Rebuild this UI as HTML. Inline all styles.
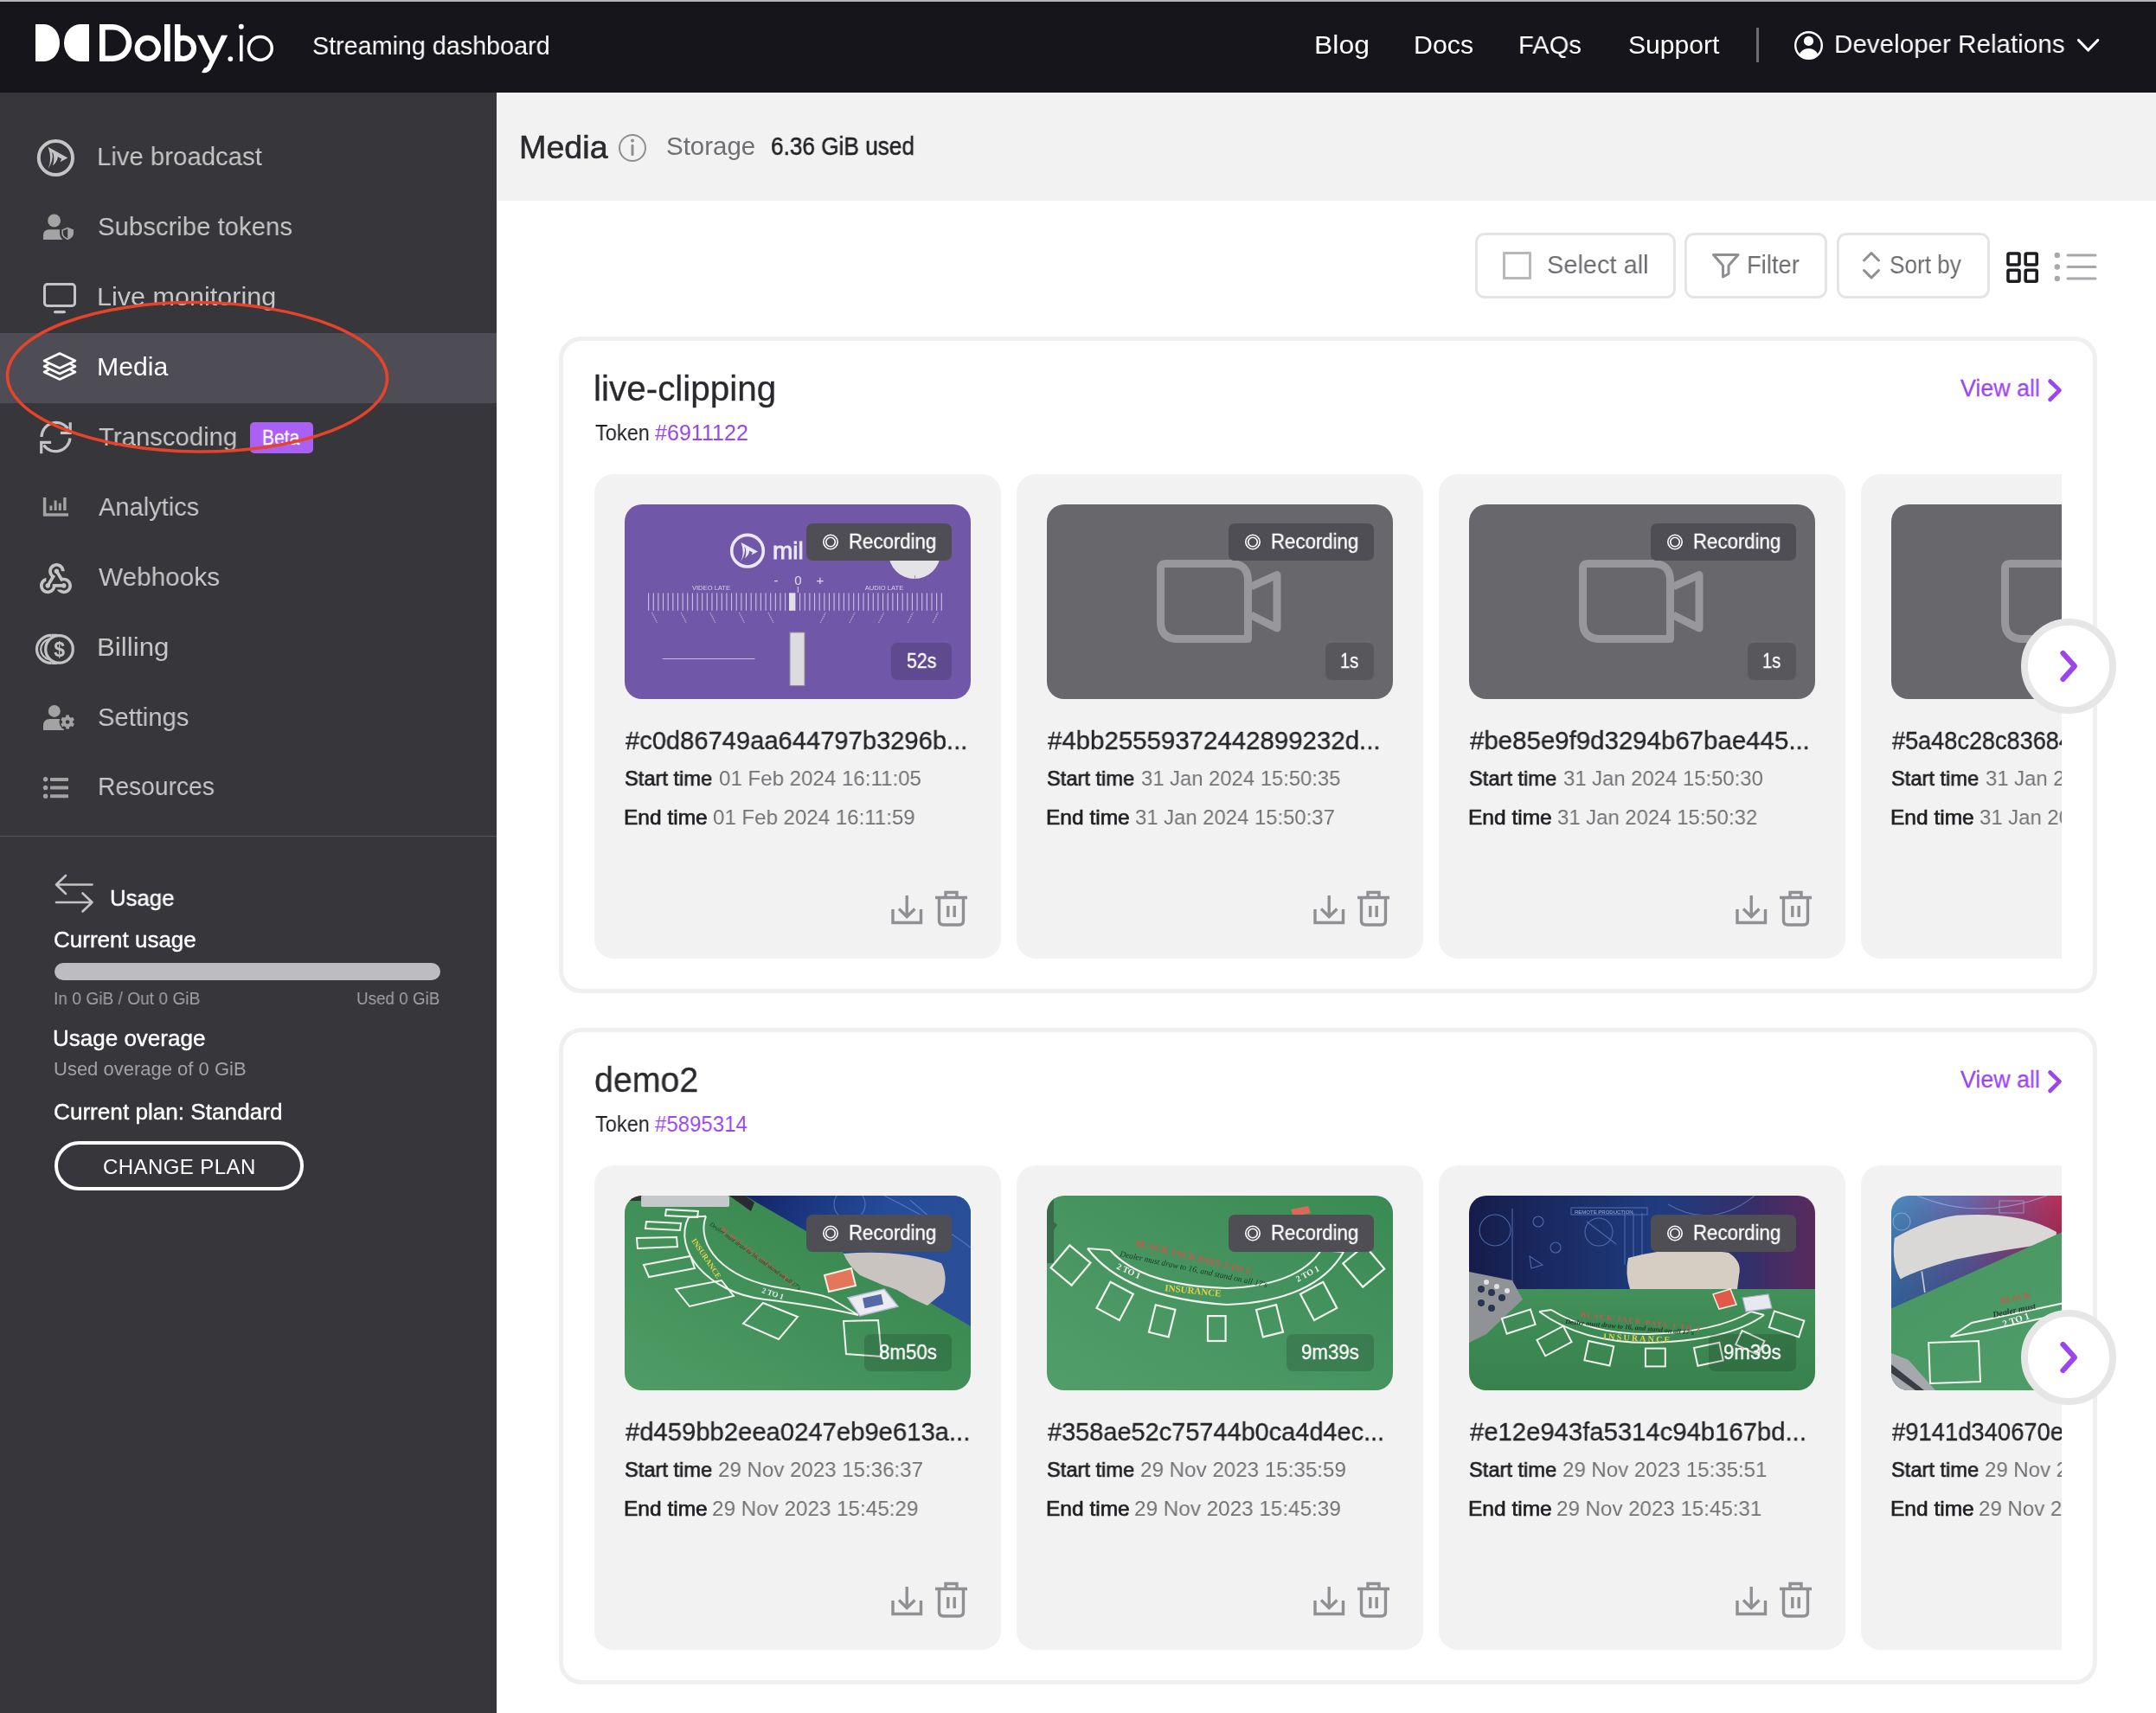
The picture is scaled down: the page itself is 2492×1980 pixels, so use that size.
<!DOCTYPE html>
<html><head><meta charset="utf-8"><title>Dolby.io Streaming dashboard - Media</title>
<style>
html,body{margin:0;padding:0;width:2492px;height:1980px;overflow:hidden;background:#fff;}
body{position:relative;font-family:"Liberation Sans",sans-serif;-webkit-font-smoothing:antialiased;}
svg{display:block}
</style></head><body>
<div style="position:absolute;left:0px;top:0px;width:2492px;height:2px;background:#b4b4b7"></div>
<div style="position:absolute;left:0px;top:2px;width:2492px;height:105px;background:#16151b"></div>
<div style="position:absolute;left:0px;top:107px;width:574px;height:1873px;background:#37363b"></div>
<div style="position:absolute;left:574px;top:107px;width:1918px;height:124.5px;background:#f2f2f2"></div>
<svg style="position:absolute;left:30px;top:15px;overflow:visible;will-change:transform;" width="300" height="80" viewBox="30 15 300 80">
<path fill="#ffffff" d="M41 28 H51 A18 21.5 0 0 1 51 71 H41 Z"/>
<path fill="#ffffff" d="M103 28 H92.6 A18.6 21.5 0 0 0 92.6 71 H103 Z"/>
<path fill="#ffffff" fill-rule="evenodd" d="M115 28 H130 A22.4 21.5 0 0 1 130 71 H115 Z M121.7 34.6 V64.4 H130 A15.7 14.9 0 0 0 130 34.6 Z"/>
<circle cx="170.75" cy="55.85" r="12.15" fill="none" stroke="#ffffff" stroke-width="6"/>
<rect x="190" y="28" width="6.7" height="43" fill="#ffffff"/>
<rect x="202" y="28" width="6.5" height="43" fill="#ffffff"/>
<defs><clipPath id="bcl"><rect x="205" y="30" width="30" height="50"/></clipPath></defs><circle cx="211.9" cy="55.85" r="12.15" fill="none" stroke="#ffffff" stroke-width="6" clip-path="url(#bcl)"/>
<path fill="#ffffff" d="M228 40.7 H235.2 L247.5 66 L244 73.5 Z"/>
<path fill="#ffffff" d="M256 40.7 H263.2 L243.5 80.5 Q240 85 234 84 L233 83.6 L236.2 78.4 Q238.6 78.6 240 76 Z"/>
<circle cx="266.3" cy="68.1" r="2.9" fill="#ffffff"/>
<rect x="277" y="40.7" width="3.6" height="30.3" fill="#ffffff"/>
<circle cx="278.8" cy="30.8" r="3" fill="#ffffff"/>
<circle cx="300.85" cy="55.85" r="13.4" fill="none" stroke="#ffffff" stroke-width="3.5"/>
</svg>
<div style="position:absolute;left:361.04px;top:37.60px;font-family:'Liberation Sans';font-size:30px;line-height:30px;font-weight:400;color:#ffffff;white-space:nowrap;will-change:transform;transform:scaleX(0.9572);transform-origin:0 0;">Streaming dashboard</div>
<div style="position:absolute;left:1518.87px;top:36.60px;font-family:'Liberation Sans';font-size:30px;line-height:30px;font-weight:400;color:#ffffff;white-space:nowrap;will-change:transform;transform:scaleX(1.0646);transform-origin:0 0;">Blog</div>
<div style="position:absolute;left:1633.98px;top:36.60px;font-family:'Liberation Sans';font-size:30px;line-height:30px;font-weight:400;color:#ffffff;white-space:nowrap;will-change:transform;transform:scaleX(1.0100);transform-origin:0 0;">Docs</div>
<div style="position:absolute;left:1755.06px;top:36.60px;font-family:'Liberation Sans';font-size:30px;line-height:30px;font-weight:400;color:#ffffff;white-space:nowrap;will-change:transform;transform:scaleX(0.9720);transform-origin:0 0;">FAQs</div>
<div style="position:absolute;left:1882.00px;top:36.60px;font-family:'Liberation Sans';font-size:30px;line-height:30px;font-weight:400;color:#ffffff;white-space:nowrap;will-change:transform;transform:scaleX(1.0025);transform-origin:0 0;">Support</div>
<div style="position:absolute;left:2029.7px;top:31.8px;width:3.5px;height:40px;background:#6e6e70"></div>
<svg style="position:absolute;left:2070px;top:32px;overflow:visible;will-change:transform;" width="42" height="42" viewBox="2070 32 42 42">
<defs><clipPath id="uc"><circle cx="2090.5" cy="52.5" r="15.3"/></clipPath></defs>
<circle cx="2090.5" cy="52.5" r="15.3" fill="none" stroke="#fff" stroke-width="2.4"/>
<circle cx="2090.5" cy="47.4" r="5.6" fill="#fff"/>
<ellipse cx="2090.5" cy="66.5" rx="11.3" ry="10.5" fill="#fff" clip-path="url(#uc)"/>
</svg>
<div style="position:absolute;left:2120.33px;top:36.00px;font-family:'Liberation Sans';font-size:30px;line-height:30px;font-weight:400;color:#ffffff;white-space:nowrap;will-change:transform;transform:scaleX(0.9867);transform-origin:0 0;">Developer Relations</div>
<svg style="position:absolute;left:2398px;top:42px;overflow:visible;will-change:transform;" width="32" height="22" viewBox="2398 42 32 22"><path d="M2402.5 46.5 L2413.6 58 L2424.7 46.5" fill="none" stroke="#fff" stroke-width="3.2" stroke-linecap="round" stroke-linejoin="round"/></svg>
<div style="position:absolute;left:0px;top:385px;width:574px;height:81px;background:#4e4d55"></div>
<div style="position:absolute;left:112.44px;top:165.60px;font-family:'Liberation Sans';font-size:30px;line-height:30px;font-weight:400;color:#c6c6c6;white-space:nowrap;will-change:transform;transform:scaleX(0.9784);transform-origin:0 0;">Live broadcast</div>
<div style="position:absolute;left:113.42px;top:246.60px;font-family:'Liberation Sans';font-size:30px;line-height:30px;font-weight:400;color:#c6c6c6;white-space:nowrap;will-change:transform;transform:scaleX(0.9775);transform-origin:0 0;">Subscribe tokens</div>
<div style="position:absolute;left:112.36px;top:327.60px;font-family:'Liberation Sans';font-size:30px;line-height:30px;font-weight:400;color:#c6c6c6;white-space:nowrap;will-change:transform;transform:scaleX(1.0183);transform-origin:0 0;">Live monitoring</div>
<div style="position:absolute;left:112.39px;top:408.60px;font-family:'Liberation Sans';font-size:30px;line-height:30px;font-weight:400;color:#ffffff;white-space:nowrap;will-change:transform;transform:scaleX(1.0072);transform-origin:0 0;">Media</div>
<div style="position:absolute;left:114.40px;top:489.60px;font-family:'Liberation Sans';font-size:30px;line-height:30px;font-weight:400;color:#c6c6c6;white-space:nowrap;will-change:transform;transform:scaleX(0.9773);transform-origin:0 0;">Transcoding</div>
<div style="position:absolute;left:114.40px;top:571.30px;font-family:'Liberation Sans';font-size:30px;line-height:30px;font-weight:400;color:#c6c6c6;white-space:nowrap;will-change:transform;transform:scaleX(0.9685);transform-origin:0 0;">Analytics</div>
<div style="position:absolute;left:114.40px;top:651.60px;font-family:'Liberation Sans';font-size:30px;line-height:30px;font-weight:400;color:#c6c6c6;white-space:nowrap;will-change:transform;transform:scaleX(0.9915);transform-origin:0 0;">Webhooks</div>
<div style="position:absolute;left:112.31px;top:732.60px;font-family:'Liberation Sans';font-size:30px;line-height:30px;font-weight:400;color:#c6c6c6;white-space:nowrap;will-change:transform;transform:scaleX(1.0425);transform-origin:0 0;">Billing</div>
<div style="position:absolute;left:113.43px;top:813.60px;font-family:'Liberation Sans';font-size:30px;line-height:30px;font-weight:400;color:#c6c6c6;white-space:nowrap;will-change:transform;transform:scaleX(0.9718);transform-origin:0 0;">Settings</div>
<div style="position:absolute;left:112.52px;top:894.10px;font-family:'Liberation Sans';font-size:30px;line-height:30px;font-weight:400;color:#c6c6c6;white-space:nowrap;will-change:transform;transform:scaleX(0.9402);transform-origin:0 0;">Resources</div>
<svg style="position:absolute;left:38px;top:155px;overflow:visible;will-change:transform;" width="54" height="55" viewBox="38 155 54 55">
<circle cx="64.4" cy="182.5" r="19.6" fill="none" stroke="#c4c4c4" stroke-width="4"/>
<path fill="#c4c4c4" d="M55.7 170 L78.4 182.4 L69.5 187.2 L71 183.6 L66.8 181.2 Q66.6 186.5 60.8 191.6 Q63.6 184 61.3 176.8 L60.2 176.2 Q62.6 184.6 55.3 195.6 Q60.8 184 55.7 170 Z"/>
</svg>
<svg style="position:absolute;left:40px;top:240px;overflow:visible;will-change:transform;" width="55" height="45" viewBox="40 240 55 45">
<circle cx="62.6" cy="255" r="7.4" fill="#a3a3a3"/>
<path fill="#a3a3a3" d="M50 277 V272 Q50 265.2 57 265.2 H69 Q73.5 265.2 73.5 270 V277 Z"/>
<path fill="#a3a3a3" stroke="#37363b" stroke-width="2.4" d="M70.2 264.6 L78.2 261.4 L86.2 264.6 V269.8 Q86.2 275.6 78.2 278.6 Q70.2 275.6 70.2 269.8 Z"/>
<path fill="#37363b" d="M78.2 264.6 L73 266.5 V269.8 Q73 273.4 78.2 275.6 Z"/>
</svg>
<svg style="position:absolute;left:45px;top:322px;overflow:visible;will-change:transform;" width="50" height="45" viewBox="45 322 50 45">
<rect x="51.5" y="328.5" width="35" height="25" rx="3.2" fill="none" stroke="#c4c4c4" stroke-width="3"/>
<rect x="62" y="359" width="14" height="3.2" rx="1.6" fill="#c4c4c4"/>
</svg>
<svg style="position:absolute;left:45px;top:400px;overflow:visible;will-change:transform;" width="50" height="48" viewBox="45 400 50 48">
<g fill="none" stroke="#fff" stroke-width="2.6" stroke-linejoin="round">
<path d="M69 408.5 L87 417 L69 425.5 L51 417 Z"/>
<path d="M56.5 420.8 L51 423.5 L69 432 L87 423.5 L81.5 420.8"/>
<path d="M56.5 427.3 L51 430 L69 438.5 L87 430 L81.5 427.3"/>
</g></svg>
<svg style="position:absolute;left:40px;top:480px;overflow:visible;will-change:transform;" width="55" height="50" viewBox="40 480 55 50">
<g fill="none" stroke="#c4c4c4" stroke-width="3.2">
<path d="M48 505 A16.8 16.8 0 0 1 78.5 495.5"/>
<path d="M81 506.5 A16.8 16.8 0 0 1 50.5 514.5"/>
<path d="M81.2 489.8 V500.4 H71.5" stroke-linecap="square"/>
<path d="M47.7 522.6 V511.3 H57.5" stroke-linecap="square"/>
</g></svg>
<svg style="position:absolute;left:45px;top:570px;overflow:visible;will-change:transform;" width="40" height="32" viewBox="45 570 40 32">
<path d="M51.6 575 V595 H79" fill="none" stroke="#a3a3a3" stroke-width="3.5"/>
<rect x="57.4" y="584.4" width="3" height="5.6" fill="#a3a3a3"/>
<rect x="62.6" y="578.5" width="3" height="11.5" fill="#a3a3a3"/>
<rect x="67.8" y="581.6" width="3" height="8.4" fill="#a3a3a3"/>
<rect x="73.2" y="575" width="3.4" height="15" fill="#a3a3a3"/>
</svg>
<svg style="position:absolute;left:42px;top:647px;overflow:visible;will-change:transform;" width="46" height="42" viewBox="42 647 46 42"><g transform="translate(42.3 647.3) scale(1.85)"><path fill="#c4c4c4" d="M10 15h5.88c.27-.31.67-.5 1.12-.5.83 0 1.5.67 1.5 1.5s-.67 1.5-1.5 1.5c-.44 0-.84-.19-1.12-.5H11.9c-.46 2.28-2.48 4-4.9 4-2.76 0-5-2.24-5-5 0-2.42 1.72-4.44 4-4.9v2.07c-1.16.41-2 1.53-2 2.83 0 1.65 1.35 3 3 3s3-1.35 3-3v-1zm2.5-11c1.650 0 3 1.35 3 3h2c0-2.76-2.24-5-5-5s-5 2.240-5 5c0 1.43.6 2.71 1.55 3.62l-2.35 3.9c-.68.14-1.2.75-1.2 1.48 0 .83.67 1.5 1.5 1.5s1.5-.67 1.5-1.5c0-.16-.02-.31-.07-.45l3.38-5.63C10.490 9.61 9.5 8.42 9.5 7c0-1.65 1.35-3 3-3zm4.5 9c-.64 0-1.23.2-1.72.54l-3.05-5.07C11.53 8.35 11 7.74 11 7c0-.83.67-1.5 1.5-1.5S14 6.17 14 7c0 .15-.02.29-.06.43l2.19 3.65c.28-.05.57-.08.87-.08 2.76 0 5 2.24 5 5s-2.24 5-5 5c-1.85 0-3.47-1.01-4.330-2.5h2.67c.48.32 1.05.5 1.66.5 1.65 0 3-1.35 3-3s-1.35-3-3-3z"/></g></svg>
<svg style="position:absolute;left:40px;top:728px;overflow:visible;will-change:transform;" width="50" height="45" viewBox="40 728 50 45">
<g fill="none" stroke="#c4c4c4" stroke-width="3.2">
<circle cx="68.5" cy="750.4" r="15.8"/>
<path d="M59.5 734.4 H66 M59.5 766.4 H66"/>
<path d="M59.5 734.4 A17 16 0 0 0 59.5 766.4"/>
<path d="M57.2 738.5 A14 12.5 0 0 0 57.2 762.5" stroke-width="2.2"/>
</g>
<text x="68.6" y="758.8" text-anchor="middle" font-family="Liberation Sans" font-weight="bold" font-size="23" fill="#c4c4c4">$</text>
</svg>
<svg style="position:absolute;left:45px;top:808px;overflow:visible;will-change:transform;" width="45" height="42" viewBox="45 808 45 42">
<circle cx="62.8" cy="821.9" r="7" fill="#a3a3a3"/>
<path fill="#a3a3a3" d="M50 844 V839 Q50 831 58 831 H68 Q74 831 74 836 V844 Z"/>
<circle cx="78.1" cy="834.5" r="9.6" fill="#37363b"/>
<g fill="#a3a3a3" transform="translate(78.1 834.5)">
<circle r="6.2"/>
<rect x="-1.9" y="-8" width="3.8" height="16"/>
<rect x="-1.9" y="-8" width="3.8" height="16" transform="rotate(60)"/>
<rect x="-1.9" y="-8" width="3.8" height="16" transform="rotate(120)"/>
</g>
<circle cx="78.1" cy="834.5" r="2.3" fill="#37363b"/>
</svg>
<svg style="position:absolute;left:45px;top:893px;overflow:visible;will-change:transform;" width="40" height="35" viewBox="45 893 40 35">
<g fill="#a3a3a3">
<circle cx="52.6" cy="900.8" r="2.7"/><circle cx="52.6" cy="910.5" r="2.7"/><circle cx="52.6" cy="920.2" r="2.7"/>
<rect x="58" y="899" width="21" height="4" rx="0.8"/><rect x="58" y="908.6" width="21" height="4" rx="0.8"/><rect x="58" y="918.2" width="21" height="4" rx="0.8"/>
</g></svg>
<div style="position:absolute;left:289px;top:488px;width:73px;height:36px;background:#ab60f4;border-radius:5px"></div>
<div style="position:absolute;left:303.12px;top:493.68px;font-family:'Liberation Sans';font-size:24px;line-height:24px;font-weight:400;color:#ffffff;white-space:nowrap;will-change:transform;transform:scaleX(0.8771);transform-origin:0 0;-webkit-text-stroke:0.3px #fff;">Beta</div>
<div style="position:absolute;left:0px;top:965.5px;width:574px;height:1.5px;background:#57565c"></div>
<svg style="position:absolute;left:60px;top:1005px;overflow:visible;will-change:transform;" width="52" height="55" viewBox="60 1005 52 55">
<g fill="none" stroke="#c4c4c4" stroke-width="2.6" stroke-linecap="round" stroke-linejoin="round">
<path d="M106.5 1022.5 H65 M76 1012 L65 1022.5 L76 1033"/>
<path d="M65 1043 H106.5 M95.5 1032.5 L106.5 1043 L95.5 1053.5"/>
</g></svg>
<div style="position:absolute;left:127.02px;top:1024.99px;font-family:'Liberation Sans';font-size:26px;line-height:26px;font-weight:400;color:#ffffff;white-space:nowrap;will-change:transform;transform:scaleX(0.9904);transform-origin:0 0;-webkit-text-stroke:0.4px #fff;">Usage</div>
<div style="position:absolute;left:62.00px;top:1072.99px;font-family:'Liberation Sans';font-size:26px;line-height:26px;font-weight:400;color:#ffffff;white-space:nowrap;will-change:transform;-webkit-text-stroke:0.4px #fff;">Current usage</div>
<div style="position:absolute;left:63px;top:1113px;width:446px;height:20px;background:#bdbcc1;border-radius:10px"></div>
<div style="position:absolute;left:62.04px;top:1144.07px;font-family:'Liberation Sans';font-size:20px;line-height:20px;font-weight:400;color:#a2a2a6;white-space:nowrap;will-change:transform;transform:scaleX(0.9578);transform-origin:0 0;">In 0 GiB / Out 0 GiB</div>
<div style="position:absolute;left:412.06px;top:1144.07px;font-family:'Liberation Sans';font-size:20px;line-height:20px;font-weight:400;color:#a2a2a6;white-space:nowrap;will-change:transform;transform:scaleX(0.9413);transform-origin:0 0;">Used 0 GiB</div>
<div style="position:absolute;left:61.00px;top:1186.99px;font-family:'Liberation Sans';font-size:26px;line-height:26px;font-weight:400;color:#ffffff;white-space:nowrap;will-change:transform;-webkit-text-stroke:0.4px #fff;">Usage overage</div>
<div style="position:absolute;left:62.00px;top:1225.37px;font-family:'Liberation Sans';font-size:22px;line-height:22px;font-weight:400;color:#a2a2a6;white-space:nowrap;will-change:transform;">Used overage of 0 GiB</div>
<div style="position:absolute;left:61.99px;top:1271.99px;font-family:'Liberation Sans';font-size:26px;line-height:26px;font-weight:400;color:#ffffff;white-space:nowrap;will-change:transform;transform:scaleX(1.0054);transform-origin:0 0;-webkit-text-stroke:0.4px #fff;">Current plan: Standard</div>
<div style="position:absolute;left:63px;top:1319px;width:288px;height:57px;box-sizing:border-box;border:4.5px solid #fff;border-radius:29px"></div>
<div style="position:absolute;left:119.00px;top:1336.68px;font-family:'Liberation Sans';font-size:24px;line-height:24px;font-weight:400;color:#ffffff;white-space:nowrap;will-change:transform;letter-spacing:0.429px;">CHANGE PLAN</div>
<svg style="position:absolute;left:0px;top:340px;overflow:visible;will-change:transform;z-index:50" width="460" height="195" viewBox="0 340 460 195"><ellipse cx="228" cy="435.8" rx="219.5" ry="86.2" fill="none" stroke="#e5432a" stroke-width="3.5" transform="rotate(0.5 228 435.8)"/></svg>
<div style="position:absolute;left:599.94px;top:151.67px;font-family:'Liberation Sans';font-size:37px;line-height:37px;font-weight:400;color:#2a2a2e;white-space:nowrap;will-change:transform;transform:scaleX(1.0184);transform-origin:0 0;-webkit-text-stroke:0.6px #2a2a2e;">Media</div>
<svg style="position:absolute;left:710px;top:150px;overflow:visible;will-change:transform;" width="42" height="42" viewBox="710 150 42 42">
<circle cx="731" cy="171" r="15" fill="none" stroke="#8e8e92" stroke-width="2"/>
<circle cx="731" cy="162.5" r="2" fill="#8e8e92"/>
<rect x="729.5" y="167" width="3" height="13" rx="1" fill="#8e8e92"/>
</svg>
<div style="position:absolute;left:769.98px;top:155.45px;font-family:'Liberation Sans';font-size:29px;line-height:29px;font-weight:400;color:#6f6f73;white-space:nowrap;will-change:transform;transform:scaleX(1.0157);transform-origin:0 0;">Storage</div>
<div style="position:absolute;left:891.10px;top:155.45px;font-family:'Liberation Sans';font-size:29px;line-height:29px;font-weight:400;color:#222226;white-space:nowrap;will-change:transform;transform:scaleX(0.9028);transform-origin:0 0;-webkit-text-stroke:0.5px #222226;">6.36 GiB used</div>
<div style="position:absolute;left:1704.5px;top:269px;width:232.5px;height:76px;box-sizing:border-box;border:3px solid #e4e4e4;border-radius:11px;background:#fff"></div>
<div style="position:absolute;left:1737px;top:291px;width:33px;height:32px;box-sizing:border-box;border:3px solid #b9b9bc;border-radius:1px"></div>
<div style="position:absolute;left:1788.03px;top:290.60px;font-family:'Liberation Sans';font-size:30px;line-height:30px;font-weight:400;color:#6e6e72;white-space:nowrap;will-change:transform;transform:scaleX(0.9659);transform-origin:0 0;">Select all</div>
<div style="position:absolute;left:1947px;top:269px;width:165px;height:76px;box-sizing:border-box;border:3px solid #e4e4e4;border-radius:11px;background:#fff"></div>
<svg style="position:absolute;left:1975px;top:288px;overflow:visible;will-change:transform;" width="40" height="38" viewBox="1975 288 40 38"><path d="M1980.5 294.5 H2009 L1998 307 V316.5 L1991.5 320 V307 Z" fill="none" stroke="#8f8f93" stroke-width="3" stroke-linejoin="round"/></svg>
<div style="position:absolute;left:2019.18px;top:290.60px;font-family:'Liberation Sans';font-size:30px;line-height:30px;font-weight:400;color:#6e6e72;white-space:nowrap;will-change:transform;transform:scaleX(0.9123);transform-origin:0 0;">Filter</div>
<div style="position:absolute;left:2122.5px;top:269px;width:177.5px;height:76px;box-sizing:border-box;border:3px solid #e4e4e4;border-radius:11px;background:#fff"></div>
<svg style="position:absolute;left:2148px;top:288px;overflow:visible;will-change:transform;" width="30" height="38" viewBox="2148 288 30 38"><path d="M2154.5 301 L2163 292.5 L2171.5 301 M2154.5 312.5 L2163 321 L2171.5 312.5" fill="none" stroke="#8f8f93" stroke-width="3" stroke-linecap="round" stroke-linejoin="round"/></svg>
<div style="position:absolute;left:2184.13px;top:290.60px;font-family:'Liberation Sans';font-size:30px;line-height:30px;font-weight:400;color:#6e6e72;white-space:nowrap;will-change:transform;transform:scaleX(0.8720);transform-origin:0 0;">Sort by</div>
<svg style="position:absolute;left:2315px;top:287px;overflow:visible;will-change:transform;" width="45" height="45" viewBox="2315 287 45 45"><g fill="none" stroke="#1d1d20" stroke-width="3.6">
<rect x="2321" y="293" width="13" height="13" rx="1.5"/><rect x="2341.2" y="293" width="13" height="13" rx="1.5"/>
<rect x="2321" y="312.2" width="13" height="13" rx="1.5"/><rect x="2341.2" y="312.2" width="13" height="13" rx="1.5"/></g></svg>
<svg style="position:absolute;left:2370px;top:287px;overflow:visible;will-change:transform;" width="58" height="45" viewBox="2370 287 58 45"><g fill="#a8a8ac">
<circle cx="2377.8" cy="295" r="3.2"/><circle cx="2377.8" cy="308.5" r="3.2"/><circle cx="2377.8" cy="322" r="3.2"/>
<rect x="2388.5" y="293.5" width="35" height="3" rx="1.5"/><rect x="2388.5" y="307" width="35" height="3" rx="1.5"/><rect x="2388.5" y="320.5" width="35" height="3" rx="1.5"/></g></svg>
<div style="position:absolute;left:646px;top:389px;width:1778px;height:759px;box-sizing:border-box;border:5px solid #efefef;border-radius:26px;background:#fff"></div>
<div style="position:absolute;left:685.98px;top:429.13px;font-family:'Liberation Sans';font-size:40px;line-height:40px;font-weight:400;color:#2a2a2e;white-space:nowrap;will-change:transform;transform:scaleX(1.0110);transform-origin:0 0;-webkit-text-stroke:0.3px #2a2a2e;">live-clipping</div>
<div style="position:absolute;left:688.00px;top:487.83px;font-family:'Liberation Sans';font-size:25px;line-height:25px;font-weight:400;color:#1e1e22;white-space:nowrap;will-change:transform;transform:scaleX(0.9421);transform-origin:0 0;">Token</div>
<div style="position:absolute;left:757.00px;top:487.83px;font-family:'Liberation Sans';font-size:25px;line-height:25px;font-weight:400;color:#9b45f2;white-space:nowrap;will-change:transform;transform:scaleX(1.0036);transform-origin:0 0;">#6911122</div>
<div style="position:absolute;left:2266.00px;top:435.64px;font-family:'Liberation Sans';font-size:27px;line-height:27px;font-weight:400;color:#9b45f2;white-space:nowrap;will-change:transform;transform:scaleX(0.9940);transform-origin:0 0;-webkit-text-stroke:0.3px #9b45f2;">View all</div>
<svg style="position:absolute;left:2362px;top:434px;overflow:visible;will-change:transform;" width="26" height="34" viewBox="2362 434 26 34"><path d="M2369.5 440.5 L2380.5 451.2 L2369.5 462" fill="none" stroke="#9b45f2" stroke-width="4.6" stroke-linecap="round" stroke-linejoin="round"/></svg>
<div style="position:absolute;left:651px;top:539px;width:1732px;height:580px;overflow:hidden"><div style="position:absolute;left:-651px;top:-539px;width:2492px;height:1980px">
<div style="position:absolute;left:687px;top:548px;width:470px;height:560px;background:#f2f2f2;border-radius:22px"></div>
<div style="position:absolute;left:722px;top:583px;width:400px;height:225px;border-radius:20px;overflow:hidden;will-change:transform"><svg width="400" height="225" viewBox="0 0 400 225" style="display:block">
<rect width="400" height="225" fill="#7157a8"/>
<circle cx="142" cy="53.7" r="18.3" fill="none" stroke="#ebe8f2" stroke-width="3.6"/>
<path fill="#ebe8f2" d="M134.5 44 L154 54.5 L146.5 58.6 L147.8 55.5 L144.2 53.5 Q144 58 139 62.4 Q141.4 56 139.4 49.8 L138.5 49.3 Q140.6 56.5 134.2 66 Q139 56 134.5 44 Z"/>
<text x="171" y="62.5" font-family="Liberation Sans" font-size="28" fill="#ebe8f2" stroke="#ebe8f2" stroke-width="0.9">mil</text>
<circle cx="335" cy="56" r="30" fill="#e4e3e8"/>
<line x1="335.5" y1="82" x2="335.5" y2="86" stroke="#9a98a0" stroke-width="1"/>
<g font-family="Liberation Sans" fill="#e2ddeb" text-anchor="middle">
<text x="175" y="93" font-size="15">-</text><text x="200.3" y="93" font-size="15">0</text><text x="226" y="93" font-size="15">+</text>
<text x="100" y="99" font-size="7.6" fill="#d8d0e8">VIDEO LATE</text><text x="300" y="99" font-size="7.6" fill="#d8d0e8">AUDIO LATE</text>
</g>
<line x1="200.3" y1="95" x2="200.3" y2="102" stroke="#e0dcea" stroke-width="1"/>
<g stroke="#cdc2e4" stroke-width="1.1"><line x1="27.60" y1="102.4" x2="27.60" y2="122.8"/><line x1="33.25" y1="102.4" x2="33.25" y2="122.8"/><line x1="38.89" y1="102.4" x2="38.89" y2="122.8"/><line x1="44.53" y1="102.4" x2="44.53" y2="122.8"/><line x1="50.18" y1="102.4" x2="50.18" y2="122.8"/><line x1="55.83" y1="102.4" x2="55.83" y2="122.8"/><line x1="61.47" y1="102.4" x2="61.47" y2="122.8"/><line x1="67.12" y1="102.4" x2="67.12" y2="122.8"/><line x1="72.76" y1="102.4" x2="72.76" y2="122.8"/><line x1="78.41" y1="102.4" x2="78.41" y2="122.8"/><line x1="84.05" y1="102.4" x2="84.05" y2="122.8"/><line x1="89.69" y1="102.4" x2="89.69" y2="122.8"/><line x1="95.34" y1="102.4" x2="95.34" y2="122.8"/><line x1="100.98" y1="102.4" x2="100.98" y2="122.8"/><line x1="106.63" y1="102.4" x2="106.63" y2="122.8"/><line x1="112.28" y1="102.4" x2="112.28" y2="122.8"/><line x1="117.92" y1="102.4" x2="117.92" y2="122.8"/><line x1="123.56" y1="102.4" x2="123.56" y2="122.8"/><line x1="129.21" y1="102.4" x2="129.21" y2="122.8"/><line x1="134.85" y1="102.4" x2="134.85" y2="122.8"/><line x1="140.50" y1="102.4" x2="140.50" y2="122.8"/><line x1="146.14" y1="102.4" x2="146.14" y2="122.8"/><line x1="151.79" y1="102.4" x2="151.79" y2="122.8"/><line x1="157.43" y1="102.4" x2="157.43" y2="122.8"/><line x1="163.08" y1="102.4" x2="163.08" y2="122.8"/><line x1="168.72" y1="102.4" x2="168.72" y2="122.8"/><line x1="174.37" y1="102.4" x2="174.37" y2="122.8"/><line x1="180.01" y1="102.4" x2="180.01" y2="122.8"/><line x1="185.66" y1="102.4" x2="185.66" y2="122.8"/><line x1="191.30" y1="102.4" x2="191.30" y2="122.8"/><line x1="196.95" y1="102.4" x2="196.95" y2="122.8"/><line x1="202.59" y1="102.4" x2="202.59" y2="122.8"/><line x1="208.24" y1="102.4" x2="208.24" y2="122.8"/><line x1="213.88" y1="102.4" x2="213.88" y2="122.8"/><line x1="219.53" y1="102.4" x2="219.53" y2="122.8"/><line x1="225.17" y1="102.4" x2="225.17" y2="122.8"/><line x1="230.82" y1="102.4" x2="230.82" y2="122.8"/><line x1="236.46" y1="102.4" x2="236.46" y2="122.8"/><line x1="242.11" y1="102.4" x2="242.11" y2="122.8"/><line x1="247.75" y1="102.4" x2="247.75" y2="122.8"/><line x1="253.40" y1="102.4" x2="253.40" y2="122.8"/><line x1="259.05" y1="102.4" x2="259.05" y2="122.8"/><line x1="264.69" y1="102.4" x2="264.69" y2="122.8"/><line x1="270.33" y1="102.4" x2="270.33" y2="122.8"/><line x1="275.98" y1="102.4" x2="275.98" y2="122.8"/><line x1="281.62" y1="102.4" x2="281.62" y2="122.8"/><line x1="287.27" y1="102.4" x2="287.27" y2="122.8"/><line x1="292.92" y1="102.4" x2="292.92" y2="122.8"/><line x1="298.56" y1="102.4" x2="298.56" y2="122.8"/><line x1="304.20" y1="102.4" x2="304.20" y2="122.8"/><line x1="309.85" y1="102.4" x2="309.85" y2="122.8"/><line x1="315.50" y1="102.4" x2="315.50" y2="122.8"/><line x1="321.14" y1="102.4" x2="321.14" y2="122.8"/><line x1="326.79" y1="102.4" x2="326.79" y2="122.8"/><line x1="332.43" y1="102.4" x2="332.43" y2="122.8"/><line x1="338.07" y1="102.4" x2="338.07" y2="122.8"/><line x1="343.72" y1="102.4" x2="343.72" y2="122.8"/><line x1="349.37" y1="102.4" x2="349.37" y2="122.8"/><line x1="355.01" y1="102.4" x2="355.01" y2="122.8"/><line x1="360.65" y1="102.4" x2="360.65" y2="122.8"/><line x1="366.30" y1="102.4" x2="366.30" y2="122.8"/></g>
<rect x="190" y="102.4" width="7" height="20.4" fill="#e2dfe8"/>
<g stroke="#a898cc" stroke-width="1.6" stroke-dasharray="1.5 1"><line x1="31.5" y1="125" x2="37.5" y2="137"/><line x1="65.2" y1="125" x2="71.2" y2="137"/><line x1="98.8" y1="125" x2="104.8" y2="137"/><line x1="132.4" y1="125" x2="138.4" y2="137"/><line x1="166" y1="125" x2="172" y2="137"/><line x1="226.3" y1="137" x2="232.3" y2="125"/><line x1="260" y1="137" x2="266" y2="125"/><line x1="293.6" y1="137" x2="299.6" y2="125"/><line x1="327.2" y1="137" x2="333.2" y2="125"/><line x1="356.2" y1="137" x2="362.2" y2="125"/></g>
<line x1="43.8" y1="178.5" x2="150.5" y2="178.5" stroke="#c9c0e0" stroke-width="1"/>
<rect x="191" y="148" width="17" height="61.6" fill="#dcdbe0" stroke="#8d8a98" stroke-width="1"/>
</svg></div>
<div style="position:absolute;left:932px;top:605px;width:168px;height:43px;background:#4f4e55;border-radius:7px"></div>
<svg style="position:absolute;left:947px;top:614px;overflow:visible;will-change:transform;" width="26" height="26" viewBox="947 614 26 26"><circle cx="960" cy="626.5" r="8.2" fill="none" stroke="#fff" stroke-width="1.6"/><circle cx="960" cy="626.5" r="5.3" fill="none" stroke="#fff" stroke-width="1.6"/></svg>
<div style="position:absolute;left:980.53px;top:614.53px;font-family:'Liberation Sans';font-size:23px;line-height:23px;font-weight:400;color:#ffffff;white-space:nowrap;will-change:transform;transform:scaleX(0.9656);transform-origin:0 0;-webkit-text-stroke:0.3px #fff;">Recording</div>
<div style="position:absolute;left:1030px;top:743px;width:70px;height:43px;background:rgba(0,0,0,0.15);border-radius:7px"></div>
<div style="position:absolute;left:1048.00px;top:752.53px;font-family:'Liberation Sans';font-size:23px;line-height:23px;font-weight:400;color:#ffffff;white-space:nowrap;will-change:transform;transform:scaleX(0.9294);transform-origin:0 0;-webkit-text-stroke:0.3px #fff;">52s</div>
<div style="position:absolute;left:723.00px;top:840.60px;font-family:'Liberation Sans';font-size:30px;line-height:30px;font-weight:400;color:#252529;white-space:nowrap;will-change:transform;transform:scaleX(0.9710);transform-origin:0 0;-webkit-text-stroke:0.35px #252529;">#c0d86749aa644797b3296b...</div>
<div style="position:absolute;left:722.03px;top:888.26px;font-family:'Liberation Sans';font-size:24.5px;line-height:24.5px;font-weight:400;color:#1f1f23;white-space:nowrap;will-change:transform;transform:scaleX(0.9651);transform-origin:0 0;-webkit-text-stroke:0.7px #1f1f23;">Start time</div>
<div style="position:absolute;left:830.70px;top:888.26px;font-family:'Liberation Sans';font-size:24.5px;line-height:24.5px;font-weight:400;color:#737377;white-space:nowrap;will-change:transform;transform:scaleX(0.9831);transform-origin:0 0;">01 Feb 2024 16:11:05</div>
<div style="position:absolute;left:721.01px;top:932.76px;font-family:'Liberation Sans';font-size:24.5px;line-height:24.5px;font-weight:400;color:#1f1f23;white-space:nowrap;will-change:transform;transform:scaleX(0.9973);transform-origin:0 0;-webkit-text-stroke:0.7px #1f1f23;">End time</div>
<div style="position:absolute;left:824.00px;top:932.76px;font-family:'Liberation Sans';font-size:24.5px;line-height:24.5px;font-weight:400;color:#737377;white-space:nowrap;will-change:transform;transform:scaleX(0.9818);transform-origin:0 0;">01 Feb 2024 16:11:59</div>
<svg style="position:absolute;left:1025px;top:1029px;overflow:visible;will-change:transform;" width="100" height="46" viewBox="1025 1029 100 46"><g fill="none" stroke="#909094" stroke-width="3.4">
<path d="M1032 1051 V1066.5 H1064.5 V1051" stroke-linejoin="miter"/>
<path d="M1048.2 1035 V1059"/>
<path d="M1039 1050.5 L1048.2 1059.5 L1057.4 1050.5"/>
<path d="M1081 1037.5 H1118"/>
<path d="M1093 1037.5 V1031.5 H1106 V1037.5"/>
<path d="M1085.5 1038 V1064 Q1085.5 1069 1090.5 1069 H1108.5 Q1113.5 1069 1113.5 1064 V1038"/>
<path d="M1095.8 1047 V1060 M1103.2 1047 V1060"/>
</g></svg>
<div style="position:absolute;left:1175px;top:548px;width:470px;height:560px;background:#f2f2f2;border-radius:22px"></div>
<div style="position:absolute;left:1210px;top:583px;width:400px;height:225px;border-radius:20px;overflow:hidden;will-change:transform"><svg width="400" height="225" viewBox="0 0 400 225" style="display:block"><rect width="400" height="225" fill="#68676c"/><g fill="none" stroke="#98979c" stroke-width="9" stroke-linejoin="round">
<path d="M137.5 68.5 H212.5 Q232.5 68.5 232.5 88.5 V155.5 H151.5 Q131.5 155.5 131.5 135.5 V74.5 Q131.5 68.5 137.5 68.5 Z"/>
<path d="M236 95 L266 81.5 V143 L236 128"/>
</g></svg></div>
<div style="position:absolute;left:1420px;top:605px;width:168px;height:43px;background:#4f4e55;border-radius:7px"></div>
<svg style="position:absolute;left:1435px;top:614px;overflow:visible;will-change:transform;" width="26" height="26" viewBox="1435 614 26 26"><circle cx="1448" cy="626.5" r="8.2" fill="none" stroke="#fff" stroke-width="1.6"/><circle cx="1448" cy="626.5" r="5.3" fill="none" stroke="#fff" stroke-width="1.6"/></svg>
<div style="position:absolute;left:1468.53px;top:614.53px;font-family:'Liberation Sans';font-size:23px;line-height:23px;font-weight:400;color:#ffffff;white-space:nowrap;will-change:transform;transform:scaleX(0.9656);transform-origin:0 0;-webkit-text-stroke:0.3px #fff;">Recording</div>
<div style="position:absolute;left:1532px;top:743px;width:56px;height:43px;background:rgba(0,0,0,0.15);border-radius:7px"></div>
<div style="position:absolute;left:1549.12px;top:752.53px;font-family:'Liberation Sans';font-size:23px;line-height:23px;font-weight:400;color:#ffffff;white-space:nowrap;will-change:transform;transform:scaleX(0.8775);transform-origin:0 0;-webkit-text-stroke:0.3px #fff;">1s</div>
<div style="position:absolute;left:1211.00px;top:840.60px;font-family:'Liberation Sans';font-size:30px;line-height:30px;font-weight:400;color:#252529;white-space:nowrap;will-change:transform;transform:scaleX(0.9807);transform-origin:0 0;-webkit-text-stroke:0.35px #252529;">#4bb25559372442899232d...</div>
<div style="position:absolute;left:1210.03px;top:888.26px;font-family:'Liberation Sans';font-size:24.5px;line-height:24.5px;font-weight:400;color:#1f1f23;white-space:nowrap;will-change:transform;transform:scaleX(0.9651);transform-origin:0 0;-webkit-text-stroke:0.7px #1f1f23;">Start time</div>
<div style="position:absolute;left:1318.70px;top:888.26px;font-family:'Liberation Sans';font-size:24.5px;line-height:24.5px;font-weight:400;color:#737377;white-space:nowrap;will-change:transform;transform:scaleX(0.9720);transform-origin:0 0;">31 Jan 2024 15:50:35</div>
<div style="position:absolute;left:1209.01px;top:932.76px;font-family:'Liberation Sans';font-size:24.5px;line-height:24.5px;font-weight:400;color:#1f1f23;white-space:nowrap;will-change:transform;transform:scaleX(0.9973);transform-origin:0 0;-webkit-text-stroke:0.7px #1f1f23;">End time</div>
<div style="position:absolute;left:1312.00px;top:932.76px;font-family:'Liberation Sans';font-size:24.5px;line-height:24.5px;font-weight:400;color:#737377;white-space:nowrap;will-change:transform;transform:scaleX(0.9737);transform-origin:0 0;">31 Jan 2024 15:50:37</div>
<svg style="position:absolute;left:1513px;top:1029px;overflow:visible;will-change:transform;" width="100" height="46" viewBox="1513 1029 100 46"><g fill="none" stroke="#909094" stroke-width="3.4">
<path d="M1520 1051 V1066.5 H1552.5 V1051" stroke-linejoin="miter"/>
<path d="M1536.2 1035 V1059"/>
<path d="M1527 1050.5 L1536.2 1059.5 L1545.4 1050.5"/>
<path d="M1569 1037.5 H1606"/>
<path d="M1581 1037.5 V1031.5 H1594 V1037.5"/>
<path d="M1573.5 1038 V1064 Q1573.5 1069 1578.5 1069 H1596.5 Q1601.5 1069 1601.5 1064 V1038"/>
<path d="M1583.8 1047 V1060 M1591.2 1047 V1060"/>
</g></svg>
<div style="position:absolute;left:1663px;top:548px;width:470px;height:560px;background:#f2f2f2;border-radius:22px"></div>
<div style="position:absolute;left:1698px;top:583px;width:400px;height:225px;border-radius:20px;overflow:hidden;will-change:transform"><svg width="400" height="225" viewBox="0 0 400 225" style="display:block"><rect width="400" height="225" fill="#68676c"/><g fill="none" stroke="#98979c" stroke-width="9" stroke-linejoin="round">
<path d="M137.5 68.5 H212.5 Q232.5 68.5 232.5 88.5 V155.5 H151.5 Q131.5 155.5 131.5 135.5 V74.5 Q131.5 68.5 137.5 68.5 Z"/>
<path d="M236 95 L266 81.5 V143 L236 128"/>
</g></svg></div>
<div style="position:absolute;left:1908px;top:605px;width:168px;height:43px;background:#4f4e55;border-radius:7px"></div>
<svg style="position:absolute;left:1923px;top:614px;overflow:visible;will-change:transform;" width="26" height="26" viewBox="1923 614 26 26"><circle cx="1936" cy="626.5" r="8.2" fill="none" stroke="#fff" stroke-width="1.6"/><circle cx="1936" cy="626.5" r="5.3" fill="none" stroke="#fff" stroke-width="1.6"/></svg>
<div style="position:absolute;left:1956.53px;top:614.53px;font-family:'Liberation Sans';font-size:23px;line-height:23px;font-weight:400;color:#ffffff;white-space:nowrap;will-change:transform;transform:scaleX(0.9656);transform-origin:0 0;-webkit-text-stroke:0.3px #fff;">Recording</div>
<div style="position:absolute;left:2020px;top:743px;width:56px;height:43px;background:rgba(0,0,0,0.15);border-radius:7px"></div>
<div style="position:absolute;left:2037.12px;top:752.53px;font-family:'Liberation Sans';font-size:23px;line-height:23px;font-weight:400;color:#ffffff;white-space:nowrap;will-change:transform;transform:scaleX(0.8775);transform-origin:0 0;-webkit-text-stroke:0.3px #fff;">1s</div>
<div style="position:absolute;left:1699.00px;top:840.60px;font-family:'Liberation Sans';font-size:30px;line-height:30px;font-weight:400;color:#252529;white-space:nowrap;will-change:transform;transform:scaleX(0.9810);transform-origin:0 0;-webkit-text-stroke:0.35px #252529;">#be85e9f9d3294b67bae445...</div>
<div style="position:absolute;left:1698.03px;top:888.26px;font-family:'Liberation Sans';font-size:24.5px;line-height:24.5px;font-weight:400;color:#1f1f23;white-space:nowrap;will-change:transform;transform:scaleX(0.9651);transform-origin:0 0;-webkit-text-stroke:0.7px #1f1f23;">Start time</div>
<div style="position:absolute;left:1806.70px;top:888.26px;font-family:'Liberation Sans';font-size:24.5px;line-height:24.5px;font-weight:400;color:#737377;white-space:nowrap;will-change:transform;transform:scaleX(0.9737);transform-origin:0 0;">31 Jan 2024 15:50:30</div>
<div style="position:absolute;left:1697.01px;top:932.76px;font-family:'Liberation Sans';font-size:24.5px;line-height:24.5px;font-weight:400;color:#1f1f23;white-space:nowrap;will-change:transform;transform:scaleX(0.9973);transform-origin:0 0;-webkit-text-stroke:0.7px #1f1f23;">End time</div>
<div style="position:absolute;left:1800.00px;top:932.76px;font-family:'Liberation Sans';font-size:24.5px;line-height:24.5px;font-weight:400;color:#737377;white-space:nowrap;will-change:transform;transform:scaleX(0.9754);transform-origin:0 0;">31 Jan 2024 15:50:32</div>
<svg style="position:absolute;left:2001px;top:1029px;overflow:visible;will-change:transform;" width="100" height="46" viewBox="2001 1029 100 46"><g fill="none" stroke="#909094" stroke-width="3.4">
<path d="M2008 1051 V1066.5 H2040.5 V1051" stroke-linejoin="miter"/>
<path d="M2024.2 1035 V1059"/>
<path d="M2015 1050.5 L2024.2 1059.5 L2033.4 1050.5"/>
<path d="M2057 1037.5 H2094"/>
<path d="M2069 1037.5 V1031.5 H2082 V1037.5"/>
<path d="M2061.5 1038 V1064 Q2061.5 1069 2066.5 1069 H2084.5 Q2089.5 1069 2089.5 1064 V1038"/>
<path d="M2071.8 1047 V1060 M2079.2 1047 V1060"/>
</g></svg>
<div style="position:absolute;left:2151px;top:548px;width:470px;height:560px;background:#f2f2f2;border-radius:22px"></div>
<div style="position:absolute;left:2186px;top:583px;width:400px;height:225px;border-radius:20px;overflow:hidden;will-change:transform"><svg width="400" height="225" viewBox="0 0 400 225" style="display:block"><rect width="400" height="225" fill="#68676c"/><g fill="none" stroke="#98979c" stroke-width="9" stroke-linejoin="round">
<path d="M137.5 68.5 H212.5 Q232.5 68.5 232.5 88.5 V155.5 H151.5 Q131.5 155.5 131.5 135.5 V74.5 Q131.5 68.5 137.5 68.5 Z"/>
<path d="M236 95 L266 81.5 V143 L236 128"/>
</g></svg></div>
<div style="position:absolute;left:2396px;top:605px;width:168px;height:43px;background:#4f4e55;border-radius:7px"></div>
<svg style="position:absolute;left:2411px;top:614px;overflow:visible;will-change:transform;" width="26" height="26" viewBox="2411 614 26 26"><circle cx="2424" cy="626.5" r="8.2" fill="none" stroke="#fff" stroke-width="1.6"/><circle cx="2424" cy="626.5" r="5.3" fill="none" stroke="#fff" stroke-width="1.6"/></svg>
<div style="position:absolute;left:2444.53px;top:614.53px;font-family:'Liberation Sans';font-size:23px;line-height:23px;font-weight:400;color:#ffffff;white-space:nowrap;will-change:transform;transform:scaleX(0.9656);transform-origin:0 0;-webkit-text-stroke:0.3px #fff;">Recording</div>
<div style="position:absolute;left:2508px;top:743px;width:56px;height:43px;background:rgba(0,0,0,0.15);border-radius:7px"></div>
<div style="position:absolute;left:2525.12px;top:752.53px;font-family:'Liberation Sans';font-size:23px;line-height:23px;font-weight:400;color:#ffffff;white-space:nowrap;will-change:transform;transform:scaleX(0.8775);transform-origin:0 0;-webkit-text-stroke:0.3px #fff;">1s</div>
<div style="position:absolute;left:2187.00px;top:840.60px;font-family:'Liberation Sans';font-size:30px;line-height:30px;font-weight:400;color:#252529;white-space:nowrap;will-change:transform;transform:scaleX(0.9031);transform-origin:0 0;-webkit-text-stroke:0.35px #252529;">#5a48c28c83684d1e9a7b21...</div>
<div style="position:absolute;left:2186.03px;top:888.26px;font-family:'Liberation Sans';font-size:24.5px;line-height:24.5px;font-weight:400;color:#1f1f23;white-space:nowrap;will-change:transform;transform:scaleX(0.9651);transform-origin:0 0;-webkit-text-stroke:0.7px #1f1f23;">Start time</div>
<div style="position:absolute;left:2294.70px;top:888.26px;font-family:'Liberation Sans';font-size:24.5px;line-height:24.5px;font-weight:400;color:#737377;white-space:nowrap;will-change:transform;transform:scaleX(0.9737);transform-origin:0 0;">31 Jan 2024 15:50:24</div>
<div style="position:absolute;left:2185.01px;top:932.76px;font-family:'Liberation Sans';font-size:24.5px;line-height:24.5px;font-weight:400;color:#1f1f23;white-space:nowrap;will-change:transform;transform:scaleX(0.9973);transform-origin:0 0;-webkit-text-stroke:0.7px #1f1f23;">End time</div>
<div style="position:absolute;left:2288.00px;top:932.76px;font-family:'Liberation Sans';font-size:24.5px;line-height:24.5px;font-weight:400;color:#737377;white-space:nowrap;will-change:transform;transform:scaleX(0.9754);transform-origin:0 0;">31 Jan 2024 15:50:26</div>
<svg style="position:absolute;left:2489px;top:1029px;overflow:visible;will-change:transform;" width="100" height="46" viewBox="2489 1029 100 46"><g fill="none" stroke="#909094" stroke-width="3.4">
<path d="M2496 1051 V1066.5 H2528.5 V1051" stroke-linejoin="miter"/>
<path d="M2512.2 1035 V1059"/>
<path d="M2503 1050.5 L2512.2 1059.5 L2521.4 1050.5"/>
<path d="M2545 1037.5 H2582"/>
<path d="M2557 1037.5 V1031.5 H2570 V1037.5"/>
<path d="M2549.5 1038 V1064 Q2549.5 1069 2554.5 1069 H2572.5 Q2577.5 1069 2577.5 1064 V1038"/>
<path d="M2559.8 1047 V1060 M2567.2 1047 V1060"/>
</g></svg>
</div></div>
<div style="position:absolute;left:2336px;top:715px;width:110px;height:110px;box-sizing:border-box;border:8px solid #e6e6e6;border-radius:50%;background:#fff"></div>
<svg style="position:absolute;left:2375px;top:749px;overflow:visible;will-change:transform;" width="34" height="44" viewBox="2375 749 34 44"><path d="M2384.5 755 L2398 770 L2384.5 785" fill="none" stroke="#9b45f2" stroke-width="6.2" stroke-linecap="round" stroke-linejoin="round"/></svg>
<div style="position:absolute;left:646px;top:1188px;width:1778px;height:759px;box-sizing:border-box;border:5px solid #efefef;border-radius:26px;background:#fff"></div>
<div style="position:absolute;left:687.02px;top:1228.13px;font-family:'Liberation Sans';font-size:40px;line-height:40px;font-weight:400;color:#2a2a2e;white-space:nowrap;will-change:transform;transform:scaleX(0.9829);transform-origin:0 0;-webkit-text-stroke:0.3px #2a2a2e;">demo2</div>
<div style="position:absolute;left:688.00px;top:1286.83px;font-family:'Liberation Sans';font-size:25px;line-height:25px;font-weight:400;color:#1e1e22;white-space:nowrap;will-change:transform;transform:scaleX(0.9421);transform-origin:0 0;">Token</div>
<div style="position:absolute;left:757.00px;top:1286.83px;font-family:'Liberation Sans';font-size:25px;line-height:25px;font-weight:400;color:#9b45f2;white-space:nowrap;will-change:transform;transform:scaleX(0.9611);transform-origin:0 0;">#5895314</div>
<div style="position:absolute;left:2266.00px;top:1234.64px;font-family:'Liberation Sans';font-size:27px;line-height:27px;font-weight:400;color:#9b45f2;white-space:nowrap;will-change:transform;transform:scaleX(0.9940);transform-origin:0 0;-webkit-text-stroke:0.3px #9b45f2;">View all</div>
<svg style="position:absolute;left:2362px;top:1233px;overflow:visible;will-change:transform;" width="26" height="34" viewBox="2362 1233 26 34"><path d="M2369.5 1239.5 L2380.5 1250.2 L2369.5 1261" fill="none" stroke="#9b45f2" stroke-width="4.6" stroke-linecap="round" stroke-linejoin="round"/></svg>
<div style="position:absolute;left:651px;top:1338px;width:1732px;height:580px;overflow:hidden"><div style="position:absolute;left:-651px;top:-1338px;width:2492px;height:1980px">
<div style="position:absolute;left:687px;top:1347px;width:470px;height:560px;background:#f2f2f2;border-radius:22px"></div>
<div style="position:absolute;left:722px;top:1382px;width:400px;height:225px;border-radius:20px;overflow:hidden;will-change:transform"><svg width="400" height="225" viewBox="0 0 400 225" style="display:block">
<defs>
<linearGradient id="ag" x1="1" y1="0" x2="0" y2="1"><stop offset="0" stop-color="#318249"/><stop offset="1" stop-color="#509c66"/></linearGradient>
</defs>
<rect width="400" height="225" fill="url(#ag)"/>
<defs><linearGradient id="ab" x1="0" y1="0" x2="1" y2="0.3"><stop offset="0" stop-color="#142468"/><stop offset="0.6" stop-color="#244c9a"/><stop offset="1" stop-color="#2a4f98"/></linearGradient></defs>
<path d="M139 0 H400 V151 Z" fill="url(#ab)"/><path d="M121 0 H139 L150 8 L146 18 Z" fill="#2a2a30"/>
<g stroke="#6f93cf" stroke-width="1.2" fill="none" opacity="0.6"><circle cx="260" cy="10" r="18"/><path d="M300 0 Q360 30 400 60"/><path d="M330 5 L370 40"/></g>
<path d="M253 67 Q320 62 366 78 Q374 92 368 112 L350 127 L330 118 Q312 106 300 104 L272 92 Q258 80 253 67 Z" fill="#c9c4c0"/>
<rect x="19" y="0" width="102" height="13" rx="2" fill="#c5c9cc"/>
<rect x="0" y="0" width="19" height="6" fill="#2b3a2e"/>
<g fill="none" stroke="#f2f2ee" stroke-width="2">
<path d="M48 16 L85 18 L84 25 L47 23 Z"/>
<path d="M25 30 L65 32 L64 40 L24 38 Z"/>
<path d="M14 49 L60 48 L61 59 L15 61 Z"/>
<path d="M22 80 L76 70 L81 84 L28 94 Z"/>
<path d="M59 108 L112 98 L126 116 L75 128 Z"/>
<path d="M137 148 L160 124 L200 140 L178 166 Z"/>
<path d="M253 145 L293 144 L297 186 L256 183 Z"/>
<path d="M74 25 C55 62 95 112 162 120 S252 134 270 138"/>
<path d="M94 23.7 C82 56 112 96 182 107 S236 120 247 124"/>
<path d="M74 25 L94 23.7"/><path d="M247 124 L270 138"/>
</g>
<text x="0" y="0" font-family="Liberation Serif" font-weight="bold" font-size="9" fill="#e6d24a" transform="translate(77 52) rotate(56)">INSURANCE</text>
<text x="0" y="0" font-family="Liberation Serif" font-weight="bold" font-size="8.5" fill="#c65a4e" transform="translate(110 40) rotate(38)">BLACK JACK PAYS 3 TO 2</text>
<text x="0" y="0" font-family="Liberation Serif" font-style="italic" font-size="7" fill="#20402a" transform="translate(98 34) rotate(36)">Dealer must draw to 16, and stand on all 17's</text>
<text x="0" y="0" font-family="Liberation Serif" font-weight="bold" font-size="9" fill="#f0f0f0" transform="translate(158 112) rotate(18)">2 TO 1</text>
<path d="M231 92 L262 84 L267 104 L236 111 Z" fill="#e4775a" stroke="#f4efe6" stroke-width="2"/>
<path d="M258 118 L300 108 L316 128 L272 139 Z" fill="#ecebf2" stroke="#b8bcd8" stroke-width="1.5"/>
<rect x="276" y="116" width="22" height="12" fill="#5568a8" transform="rotate(-12 287 122)"/>
</svg></div>
<div style="position:absolute;left:932px;top:1404px;width:168px;height:43px;background:#4f4e55;border-radius:7px"></div>
<svg style="position:absolute;left:947px;top:1413px;overflow:visible;will-change:transform;" width="26" height="26" viewBox="947 1413 26 26"><circle cx="960" cy="1425.5" r="8.2" fill="none" stroke="#fff" stroke-width="1.6"/><circle cx="960" cy="1425.5" r="5.3" fill="none" stroke="#fff" stroke-width="1.6"/></svg>
<div style="position:absolute;left:980.53px;top:1413.53px;font-family:'Liberation Sans';font-size:23px;line-height:23px;font-weight:400;color:#ffffff;white-space:nowrap;will-change:transform;transform:scaleX(0.9656);transform-origin:0 0;-webkit-text-stroke:0.3px #fff;">Recording</div>
<div style="position:absolute;left:998.5px;top:1542px;width:101.5px;height:43px;background:rgba(0,0,0,0.15);border-radius:7px"></div>
<div style="position:absolute;left:1015.53px;top:1551.53px;font-family:'Liberation Sans';font-size:23px;line-height:23px;font-weight:400;color:#ffffff;white-space:nowrap;will-change:transform;transform:scaleX(0.9699);transform-origin:0 0;-webkit-text-stroke:0.3px #fff;">8m50s</div>
<div style="position:absolute;left:723.00px;top:1639.60px;font-family:'Liberation Sans';font-size:30px;line-height:30px;font-weight:400;color:#252529;white-space:nowrap;will-change:transform;transform:scaleX(0.9744);transform-origin:0 0;-webkit-text-stroke:0.35px #252529;">#d459bb2eea0247eb9e613a...</div>
<div style="position:absolute;left:722.03px;top:1687.26px;font-family:'Liberation Sans';font-size:24.5px;line-height:24.5px;font-weight:400;color:#1f1f23;white-space:nowrap;will-change:transform;transform:scaleX(0.9651);transform-origin:0 0;-webkit-text-stroke:0.7px #1f1f23;">Start time</div>
<div style="position:absolute;left:829.72px;top:1687.26px;font-family:'Liberation Sans';font-size:24.5px;line-height:24.5px;font-weight:400;color:#737377;white-space:nowrap;will-change:transform;transform:scaleX(0.9829);transform-origin:0 0;">29 Nov 2023 15:36:37</div>
<div style="position:absolute;left:721.01px;top:1731.76px;font-family:'Liberation Sans';font-size:24.5px;line-height:24.5px;font-weight:400;color:#1f1f23;white-space:nowrap;will-change:transform;transform:scaleX(0.9973);transform-origin:0 0;-webkit-text-stroke:0.7px #1f1f23;">End time</div>
<div style="position:absolute;left:823.01px;top:1731.76px;font-family:'Liberation Sans';font-size:24.5px;line-height:24.5px;font-weight:400;color:#737377;white-space:nowrap;will-change:transform;transform:scaleX(0.9888);transform-origin:0 0;">29 Nov 2023 15:45:29</div>
<svg style="position:absolute;left:1025px;top:1828px;overflow:visible;will-change:transform;" width="100" height="46" viewBox="1025 1828 100 46"><g fill="none" stroke="#909094" stroke-width="3.4">
<path d="M1032 1850 V1865.5 H1064.5 V1850" stroke-linejoin="miter"/>
<path d="M1048.2 1834 V1858"/>
<path d="M1039 1849.5 L1048.2 1858.5 L1057.4 1849.5"/>
<path d="M1081 1836.5 H1118"/>
<path d="M1093 1836.5 V1830.5 H1106 V1836.5"/>
<path d="M1085.5 1837 V1863 Q1085.5 1868 1090.5 1868 H1108.5 Q1113.5 1868 1113.5 1863 V1837"/>
<path d="M1095.8 1846 V1859 M1103.2 1846 V1859"/>
</g></svg>
<div style="position:absolute;left:1175px;top:1347px;width:470px;height:560px;background:#f2f2f2;border-radius:22px"></div>
<div style="position:absolute;left:1210px;top:1382px;width:400px;height:225px;border-radius:20px;overflow:hidden;will-change:transform"><svg width="400" height="225" viewBox="0 0 400 225" style="display:block">
<defs>
<linearGradient id="bg" x1="1" y1="0" x2="0" y2="1"><stop offset="0" stop-color="#3a8a54"/><stop offset="1" stop-color="#529e6a"/></linearGradient>
</defs>
<rect width="400" height="225" fill="url(#bg)"/>
<path d="M0 0 H8 V30 L12 34 L8 40 V78 H0 Z" fill="#2f5a3c" opacity="0.7"/>
<path d="M282 16 L302 12 L305 20 L285 24 Z" fill="#d86a5a"/>
<g fill="none" stroke="#f2f2ee" stroke-width="2.2"><rect x="11.8" y="63.5" width="31.4" height="34.0" transform="rotate(40 27.5 80.5)"/><rect x="63.8" y="104.8" width="29.8" height="34.1" transform="rotate(28 78.7 121.8)"/><rect x="121.5" y="128.6" width="23.4" height="32.4" transform="rotate(14 133.2 144.8)"/><rect x="186.0" y="139.1" width="20.6" height="28.9" transform="rotate(0 196.3 153.5)"/><rect x="245.6" y="128.6" width="23.8" height="32.4" transform="rotate(-14 257.5 144.8)"/><rect x="299.2" y="104.8" width="29.8" height="34.1" transform="rotate(-28 314.1 121.8)"/><rect x="350.0" y="63.7" width="32.7" height="35.6" transform="rotate(-40 366.3 81.6)"/>
<path d="M47 61 Q90 118 208 126 Q310 122 343 65"/>
<path d="M73 63 Q110 104 208 107 Q290 104 317 63"/>
<path d="M47 61 L73 63"/><path d="M317 63 L343 65"/>
</g>
<text x="0" y="0" font-family="Liberation Serif" font-weight="bold" font-size="11" fill="#e2d24a" transform="translate(136 110) rotate(6)">INSURANCE</text>
<text x="0" y="0" font-family="Liberation Serif" font-weight="bold" font-size="11" fill="#c9584c" transform="translate(102 58) rotate(14)">BLACK JACK PAYS 3 TO 2</text>
<text x="0" y="0" font-family="Liberation Serif" font-style="italic" font-size="9.5" fill="#1f3a26" transform="translate(84 70) rotate(12)">Dealer must draw to 16, and stand on all 17's</text>
<text x="0" y="0" font-family="Liberation Serif" font-weight="bold" font-size="10" fill="#f0f0f0" transform="translate(80 84) rotate(25)">2 TO 1</text>
<text x="0" y="0" font-family="Liberation Serif" font-weight="bold" font-size="10" fill="#f0f0f0" transform="translate(290 100) rotate(-28)">2 TO 1</text>
</svg></div>
<div style="position:absolute;left:1420px;top:1404px;width:168px;height:43px;background:#4f4e55;border-radius:7px"></div>
<svg style="position:absolute;left:1435px;top:1413px;overflow:visible;will-change:transform;" width="26" height="26" viewBox="1435 1413 26 26"><circle cx="1448" cy="1425.5" r="8.2" fill="none" stroke="#fff" stroke-width="1.6"/><circle cx="1448" cy="1425.5" r="5.3" fill="none" stroke="#fff" stroke-width="1.6"/></svg>
<div style="position:absolute;left:1468.53px;top:1413.53px;font-family:'Liberation Sans';font-size:23px;line-height:23px;font-weight:400;color:#ffffff;white-space:nowrap;will-change:transform;transform:scaleX(0.9656);transform-origin:0 0;-webkit-text-stroke:0.3px #fff;">Recording</div>
<div style="position:absolute;left:1486.6px;top:1542px;width:101.4px;height:43px;background:rgba(0,0,0,0.15);border-radius:7px"></div>
<div style="position:absolute;left:1503.63px;top:1551.53px;font-family:'Liberation Sans';font-size:23px;line-height:23px;font-weight:400;color:#ffffff;white-space:nowrap;will-change:transform;transform:scaleX(0.9684);transform-origin:0 0;-webkit-text-stroke:0.3px #fff;">9m39s</div>
<div style="position:absolute;left:1211.00px;top:1639.60px;font-family:'Liberation Sans';font-size:30px;line-height:30px;font-weight:400;color:#252529;white-space:nowrap;will-change:transform;transform:scaleX(0.9640);transform-origin:0 0;-webkit-text-stroke:0.35px #252529;">#358ae52c75744b0ca4d4ec...</div>
<div style="position:absolute;left:1210.03px;top:1687.26px;font-family:'Liberation Sans';font-size:24.5px;line-height:24.5px;font-weight:400;color:#1f1f23;white-space:nowrap;will-change:transform;transform:scaleX(0.9651);transform-origin:0 0;-webkit-text-stroke:0.7px #1f1f23;">Start time</div>
<div style="position:absolute;left:1317.71px;top:1687.26px;font-family:'Liberation Sans';font-size:24.5px;line-height:24.5px;font-weight:400;color:#737377;white-space:nowrap;will-change:transform;transform:scaleX(0.9867);transform-origin:0 0;">29 Nov 2023 15:35:59</div>
<div style="position:absolute;left:1209.01px;top:1731.76px;font-family:'Liberation Sans';font-size:24.5px;line-height:24.5px;font-weight:400;color:#1f1f23;white-space:nowrap;will-change:transform;transform:scaleX(0.9973);transform-origin:0 0;-webkit-text-stroke:0.7px #1f1f23;">End time</div>
<div style="position:absolute;left:1311.01px;top:1731.76px;font-family:'Liberation Sans';font-size:24.5px;line-height:24.5px;font-weight:400;color:#737377;white-space:nowrap;will-change:transform;transform:scaleX(0.9905);transform-origin:0 0;">29 Nov 2023 15:45:39</div>
<svg style="position:absolute;left:1513px;top:1828px;overflow:visible;will-change:transform;" width="100" height="46" viewBox="1513 1828 100 46"><g fill="none" stroke="#909094" stroke-width="3.4">
<path d="M1520 1850 V1865.5 H1552.5 V1850" stroke-linejoin="miter"/>
<path d="M1536.2 1834 V1858"/>
<path d="M1527 1849.5 L1536.2 1858.5 L1545.4 1849.5"/>
<path d="M1569 1836.5 H1606"/>
<path d="M1581 1836.5 V1830.5 H1594 V1836.5"/>
<path d="M1573.5 1837 V1863 Q1573.5 1868 1578.5 1868 H1596.5 Q1601.5 1868 1601.5 1863 V1837"/>
<path d="M1583.8 1846 V1859 M1591.2 1846 V1859"/>
</g></svg>
<div style="position:absolute;left:1663px;top:1347px;width:470px;height:560px;background:#f2f2f2;border-radius:22px"></div>
<div style="position:absolute;left:1698px;top:1382px;width:400px;height:225px;border-radius:20px;overflow:hidden;will-change:transform"><svg width="400" height="225" viewBox="0 0 400 225" style="display:block">
<defs><linearGradient id="cbk" x1="0" y1="0" x2="1" y2="0"><stop offset="0" stop-color="#161c4a"/><stop offset="0.55" stop-color="#1f3c80"/><stop offset="0.8" stop-color="#33306a"/><stop offset="1" stop-color="#5a2a5c"/></linearGradient>
<linearGradient id="cgr" x1="0" y1="0" x2="0" y2="1"><stop offset="0" stop-color="#42905a"/><stop offset="1" stop-color="#37814c"/></linearGradient></defs>
<rect width="400" height="110" fill="url(#cbk)"/>
<g stroke="#5f7fc0" stroke-width="1.1" fill="none" opacity="0.75">
<rect x="118" y="14" width="88" height="8"/><circle cx="150" cy="42" r="16"/><path d="M136 30 L170 56 M180 20 V80 M190 20 V80 M200 20 V80"/>
<circle cx="30" cy="40" r="18"/><circle cx="80" cy="30" r="6"/><circle cx="100" cy="60" r="6"/><path d="M50 15 V100"/><path d="M230 10 Q280 40 330 0"/><path d="M260 60 H330"/>
<path d="M70 70 L85 80 L72 84 Z"/><path d="M350 30 L370 60"/>
</g>
<text x="122" y="21" font-family="Liberation Sans" font-size="6" fill="#9fb2e0">REMOTE PRODUCTION</text>
<path d="M184 72 Q240 56 300 66 Q316 76 312 92 L310 108 H186 Q180 90 184 72 Z" fill="#d6cec3"/>
<line x1="226" y1="108" x2="226" y2="118" stroke="#a9a49e" stroke-width="1.5"/>
<rect y="108" width="400" height="117" fill="url(#cgr)"/>
<path d="M0 88 L50 98 L62 120 L20 160 L0 170 Z" fill="#8f9396"/>
<g fill="#2a3350"><circle cx="14" cy="108" r="4"/><circle cx="26" cy="112" r="4"/><circle cx="38" cy="118" r="4"/><circle cx="14" cy="124" r="4"/><circle cx="26" cy="130" r="4"/></g>
<g fill="#dfe3e8"><circle cx="20" cy="100" r="3"/><circle cx="32" cy="105" r="3"/><circle cx="44" cy="110" r="3"/></g>
<g fill="none" stroke="#f2f2ee" stroke-width="2"><rect x="39.9" y="136.3" width="34.7" height="18.4" transform="rotate(-18 57.3 145.5)"/><rect x="81.3" y="157.6" width="34.4" height="20.8" transform="rotate(-28 98.5 168.0)"/><rect x="135.4" y="170.8" width="29.8" height="22.8" transform="rotate(12 150.3 182.2)"/><rect x="203.9" y="176.6" width="22.9" height="20.8" transform="rotate(0 215.3 187.0)"/><rect x="261.8" y="172.7" width="30.0" height="21.2" transform="rotate(-12 276.8 183.2)"/><rect x="310.6" y="161.2" width="28.5" height="17.6" transform="rotate(25 324.8 170.0)"/><rect x="349.0" y="138.5" width="36.2" height="19.8" transform="rotate(18 367.1 148.3)"/>
<path d="M81 134 Q130 170 207 170 Q300 168 341 138"/>
<path d="M95 132 Q140 160 207 160 Q285 158 326 134"/>
<path d="M81 134 L95 132"/><path d="M326 134 L341 138"/>
</g>
<text x="0" y="0" font-family="Liberation Serif" font-weight="bold" font-size="10" letter-spacing="2.2" fill="#e2d24a" transform="translate(155 166) rotate(3)">INSURANCE</text>
<text x="0" y="0" font-family="Liberation Serif" font-weight="bold" font-size="8.5" letter-spacing="1.6" fill="#c9584c" transform="translate(129 140) rotate(7)">BLACK JACK PAYS 3 TO 2</text>
<text x="0" y="0" font-family="Liberation Serif" font-style="italic" font-weight="bold" font-size="8" fill="#1f3a26" transform="translate(111 148) rotate(5)">Dealer must draw to 16, and stand on all 17's</text>
<path d="M282 114 L302 108 L309 126 L289 131 Z" fill="#e05a4a" stroke="#f2eee8" stroke-width="1.5"/>
<path d="M316 118 L346 114 L350 130 L320 134 Z" fill="#e8e8f0" stroke="#a8acc8" stroke-width="1.2"/>
</svg></div>
<div style="position:absolute;left:1908px;top:1404px;width:168px;height:43px;background:#4f4e55;border-radius:7px"></div>
<svg style="position:absolute;left:1923px;top:1413px;overflow:visible;will-change:transform;" width="26" height="26" viewBox="1923 1413 26 26"><circle cx="1936" cy="1425.5" r="8.2" fill="none" stroke="#fff" stroke-width="1.6"/><circle cx="1936" cy="1425.5" r="5.3" fill="none" stroke="#fff" stroke-width="1.6"/></svg>
<div style="position:absolute;left:1956.53px;top:1413.53px;font-family:'Liberation Sans';font-size:23px;line-height:23px;font-weight:400;color:#ffffff;white-space:nowrap;will-change:transform;transform:scaleX(0.9656);transform-origin:0 0;-webkit-text-stroke:0.3px #fff;">Recording</div>
<div style="position:absolute;left:1974.8px;top:1542px;width:101.2px;height:43px;background:rgba(0,0,0,0.15);border-radius:7px"></div>
<div style="position:absolute;left:1991.83px;top:1551.53px;font-family:'Liberation Sans';font-size:23px;line-height:23px;font-weight:400;color:#ffffff;white-space:nowrap;will-change:transform;transform:scaleX(0.9654);transform-origin:0 0;-webkit-text-stroke:0.3px #fff;">9m39s</div>
<div style="position:absolute;left:1699.00px;top:1639.60px;font-family:'Liberation Sans';font-size:30px;line-height:30px;font-weight:400;color:#252529;white-space:nowrap;will-change:transform;transform:scaleX(0.9753);transform-origin:0 0;-webkit-text-stroke:0.35px #252529;">#e12e943fa5314c94b167bd...</div>
<div style="position:absolute;left:1698.03px;top:1687.26px;font-family:'Liberation Sans';font-size:24.5px;line-height:24.5px;font-weight:400;color:#1f1f23;white-space:nowrap;will-change:transform;transform:scaleX(0.9651);transform-origin:0 0;-webkit-text-stroke:0.7px #1f1f23;">Start time</div>
<div style="position:absolute;left:1805.72px;top:1687.26px;font-family:'Liberation Sans';font-size:24.5px;line-height:24.5px;font-weight:400;color:#737377;white-space:nowrap;will-change:transform;transform:scaleX(0.9804);transform-origin:0 0;">29 Nov 2023 15:35:51</div>
<div style="position:absolute;left:1697.01px;top:1731.76px;font-family:'Liberation Sans';font-size:24.5px;line-height:24.5px;font-weight:400;color:#1f1f23;white-space:nowrap;will-change:transform;transform:scaleX(0.9973);transform-origin:0 0;-webkit-text-stroke:0.7px #1f1f23;">End time</div>
<div style="position:absolute;left:1799.02px;top:1731.76px;font-family:'Liberation Sans';font-size:24.5px;line-height:24.5px;font-weight:400;color:#737377;white-space:nowrap;will-change:transform;transform:scaleX(0.9842);transform-origin:0 0;">29 Nov 2023 15:45:31</div>
<svg style="position:absolute;left:2001px;top:1828px;overflow:visible;will-change:transform;" width="100" height="46" viewBox="2001 1828 100 46"><g fill="none" stroke="#909094" stroke-width="3.4">
<path d="M2008 1850 V1865.5 H2040.5 V1850" stroke-linejoin="miter"/>
<path d="M2024.2 1834 V1858"/>
<path d="M2015 1849.5 L2024.2 1858.5 L2033.4 1849.5"/>
<path d="M2057 1836.5 H2094"/>
<path d="M2069 1836.5 V1830.5 H2082 V1836.5"/>
<path d="M2061.5 1837 V1863 Q2061.5 1868 2066.5 1868 H2084.5 Q2089.5 1868 2089.5 1863 V1837"/>
<path d="M2071.8 1846 V1859 M2079.2 1846 V1859"/>
</g></svg>
<div style="position:absolute;left:2151px;top:1347px;width:470px;height:560px;background:#f2f2f2;border-radius:22px"></div>
<div style="position:absolute;left:2186px;top:1382px;width:400px;height:225px;border-radius:20px;overflow:hidden;will-change:transform"><svg width="400" height="225" viewBox="0 0 400 225" style="display:block">
<defs><linearGradient id="dbk" gradientUnits="userSpaceOnUse" x1="0" y1="0" x2="196" y2="0"><stop offset="0" stop-color="#4a8cc2"/><stop offset="0.45" stop-color="#6a66aa"/><stop offset="0.85" stop-color="#a53c70"/><stop offset="1" stop-color="#b8305a"/></linearGradient>
<linearGradient id="dbk2" x1="0" y1="0" x2="0" y2="1"><stop offset="0" stop-color="#000" stop-opacity="0"/><stop offset="1" stop-color="#1a2a6a" stop-opacity="0.5"/></linearGradient>
<linearGradient id="dgr" x1="0" y1="0" x2="1" y2="1"><stop offset="0" stop-color="#45935f"/><stop offset="1" stop-color="#52a06c"/></linearGradient></defs>
<rect width="400" height="225" fill="url(#dbk)"/>
<rect width="400" height="140" fill="url(#dbk2)"/>
<g stroke="#a8c4e8" stroke-width="1.1" fill="none" opacity="0.55"><circle cx="12" cy="30" r="10"/><path d="M30 0 Q100 30 180 0"/><rect x="125" y="6" width="28" height="14"/><path d="M100 30 Q110 15 120 30 T140 30"/></g>
<path d="M3.8 49 Q40 28 75.6 22.8 Q150 18 191 42 Q192 52 180.7 56 Q130 62 75.6 73.6 Q30 86 10.8 96.4 Q0 80 3.8 49 Z" fill="#dad8d6"/>
<line x1="35.3" y1="87.6" x2="38.8" y2="112" stroke="#d0d0d0" stroke-width="1.6"/>
<path d="M0 130.5 L195.6 43 L400 -40 V225 H0 Z" fill="url(#dgr)"/>
<g fill="none" stroke="#f4f4f0" stroke-width="2">
<path d="M43.2 170 L101 168 L103 215 L45 217 Z"/>
<path d="M68.6 163 L93 147 L200 124"/>
<path d="M68.6 163 L110 156 L200 136"/>
</g>
<text x="0" y="0" font-family="Liberation Serif" font-weight="bold" font-size="10" fill="#c9584c" transform="translate(127 125) rotate(-12)">BLACK</text>
<text x="0" y="0" font-family="Liberation Serif" font-style="italic" font-weight="bold" font-size="10" fill="#2a3a30" transform="translate(118 141) rotate(-12)">Dealer must</text>
<text x="0" y="0" font-family="Liberation Serif" font-weight="bold" font-size="11" fill="#f0f0f0" transform="translate(130 152) rotate(-18)">2 TO 1</text>
<path d="M0 182 L20 190 L51 225 H0 Z" fill="#a5a9ad"/><path d="M0 195 L38 225 H28 L0 205 Z" fill="#3a3e44"/>
</svg></div>
<div style="position:absolute;left:2396px;top:1404px;width:168px;height:43px;background:#4f4e55;border-radius:7px"></div>
<svg style="position:absolute;left:2411px;top:1413px;overflow:visible;will-change:transform;" width="26" height="26" viewBox="2411 1413 26 26"><circle cx="2424" cy="1425.5" r="8.2" fill="none" stroke="#fff" stroke-width="1.6"/><circle cx="2424" cy="1425.5" r="5.3" fill="none" stroke="#fff" stroke-width="1.6"/></svg>
<div style="position:absolute;left:2444.53px;top:1413.53px;font-family:'Liberation Sans';font-size:23px;line-height:23px;font-weight:400;color:#ffffff;white-space:nowrap;will-change:transform;transform:scaleX(0.9656);transform-origin:0 0;-webkit-text-stroke:0.3px #fff;">Recording</div>
<div style="position:absolute;left:2462.7px;top:1542px;width:101.3px;height:43px;background:rgba(0,0,0,0.15);border-radius:7px"></div>
<div style="position:absolute;left:2479.73px;top:1551.53px;font-family:'Liberation Sans';font-size:23px;line-height:23px;font-weight:400;color:#ffffff;white-space:nowrap;will-change:transform;transform:scaleX(0.9669);transform-origin:0 0;-webkit-text-stroke:0.3px #fff;">9m40s</div>
<div style="position:absolute;left:2187.00px;top:1639.60px;font-family:'Liberation Sans';font-size:30px;line-height:30px;font-weight:400;color:#252529;white-space:nowrap;will-change:transform;transform:scaleX(0.9133);transform-origin:0 0;-webkit-text-stroke:0.35px #252529;">#9141d340670e4b8c8a2f5d...</div>
<div style="position:absolute;left:2186.03px;top:1687.26px;font-family:'Liberation Sans';font-size:24.5px;line-height:24.5px;font-weight:400;color:#1f1f23;white-space:nowrap;will-change:transform;transform:scaleX(0.9651);transform-origin:0 0;-webkit-text-stroke:0.7px #1f1f23;">Start time</div>
<div style="position:absolute;left:2293.72px;top:1687.26px;font-family:'Liberation Sans';font-size:24.5px;line-height:24.5px;font-weight:400;color:#737377;white-space:nowrap;will-change:transform;transform:scaleX(0.9783);transform-origin:0 0;">29 Nov 2023 15:35:44</div>
<div style="position:absolute;left:2185.01px;top:1731.76px;font-family:'Liberation Sans';font-size:24.5px;line-height:24.5px;font-weight:400;color:#1f1f23;white-space:nowrap;will-change:transform;transform:scaleX(0.9973);transform-origin:0 0;-webkit-text-stroke:0.7px #1f1f23;">End time</div>
<div style="position:absolute;left:2287.02px;top:1731.76px;font-family:'Liberation Sans';font-size:24.5px;line-height:24.5px;font-weight:400;color:#737377;white-space:nowrap;will-change:transform;transform:scaleX(0.9813);transform-origin:0 0;">29 Nov 2023 15:45:24</div>
<svg style="position:absolute;left:2489px;top:1828px;overflow:visible;will-change:transform;" width="100" height="46" viewBox="2489 1828 100 46"><g fill="none" stroke="#909094" stroke-width="3.4">
<path d="M2496 1850 V1865.5 H2528.5 V1850" stroke-linejoin="miter"/>
<path d="M2512.2 1834 V1858"/>
<path d="M2503 1849.5 L2512.2 1858.5 L2521.4 1849.5"/>
<path d="M2545 1836.5 H2582"/>
<path d="M2557 1836.5 V1830.5 H2570 V1836.5"/>
<path d="M2549.5 1837 V1863 Q2549.5 1868 2554.5 1868 H2572.5 Q2577.5 1868 2577.5 1863 V1837"/>
<path d="M2559.8 1846 V1859 M2567.2 1846 V1859"/>
</g></svg>
</div></div>
<div style="position:absolute;left:2336px;top:1514px;width:110px;height:110px;box-sizing:border-box;border:8px solid #e6e6e6;border-radius:50%;background:#fff"></div>
<svg style="position:absolute;left:2375px;top:1548px;overflow:visible;will-change:transform;" width="34" height="44" viewBox="2375 1548 34 44"><path d="M2384.5 1554 L2398 1569 L2384.5 1584" fill="none" stroke="#9b45f2" stroke-width="6.2" stroke-linecap="round" stroke-linejoin="round"/></svg>
</body></html>
